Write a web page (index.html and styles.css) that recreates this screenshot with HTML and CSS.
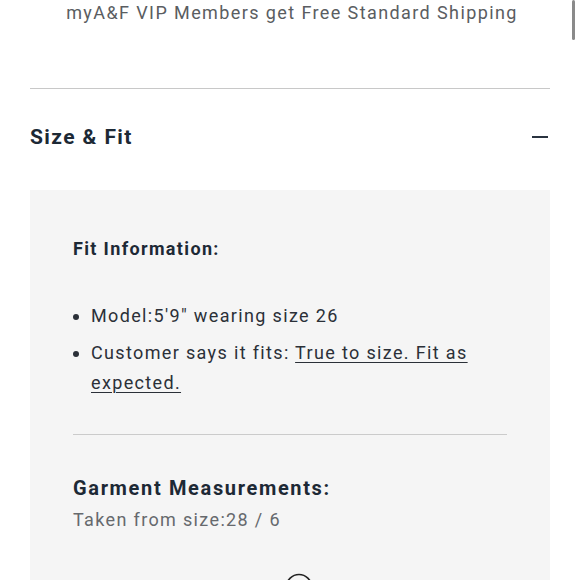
FILE: index.html
```html
<!DOCTYPE html>
<html lang="en">
<head>
<meta charset="utf-8">
<title>Size &amp; Fit</title>
<link rel="stylesheet" href="styles.css">
</head>
<body>
<p class="shipping">myA&amp;F VIP Members get Free Standard Shipping</p>
<section class="accordion">
  <div class="acc-header">
    <h2 class="acc-title">Size &amp; Fit</h2>
    <span class="minus" aria-hidden="true"></span>
  </div>
  <div class="acc-panel">
    <h3 class="fit-title">Fit Information:</h3>
    <ul class="fit-list">
      <li>Model:5'9" wearing size 26</li>
      <li>Customer says it fits: <a class="fit-link" href="#">True to size. Fit as expected.</a></li>
    </ul>
    <hr class="divider">
    <h3 class="garment-title">Garment Measurements:</h3>
    <p class="taken">Taken from size:28 / 6</p>
    <div class="icon-row">
      <svg class="circle-icon" width="28" height="28" viewBox="0 0 28 28"><circle cx="14" cy="14" r="12.5" fill="none" stroke="#222" stroke-width="1.6"/></svg>
    </div>
  </div>
</section>
<div class="scrollbar"></div>
</body>
</html>
```
FILE: styles.css
```css
html, body {
  margin: 0;
  padding: 0;
  background: #fff;
  overflow: hidden;
}
body {
  font-family: Roboto, "Liberation Sans", sans-serif;
  color: #2b3038;
}
.shipping {
  margin: 0;
  text-align: center;
  font-size: 18px;
  line-height: 26px;
  letter-spacing: 1.4px;
  color: #5a5d61;
  padding-left: 4px;
}
.accordion {
  margin: 62px 30px 0;
  border-top: 1px solid #c8c8c8;
}
.acc-header {
  display: flex;
  align-items: center;
  justify-content: space-between;
  padding: 34px 0 39px;
}
.acc-title {
  margin: 0;
  font-size: 21px;
  line-height: 28px;
  font-weight: 700;
  letter-spacing: 1.4px;
  color: #1d2935;
}
.minus {
  width: 16px;
  height: 1.5px;
  background: #2a3340;
  margin-right: 2px;
}
.acc-panel {
  background: #f5f5f5;
  padding: 45px 43px 0;
}
.fit-title {
  margin: 0;
  font-size: 18px;
  line-height: 28px;
  font-weight: 700;
  letter-spacing: 1.35px;
  color: #1d2935;
}
.fit-list {
  margin: 38px 0 0;
  padding-left: 18px;
  font-size: 18px;
  line-height: 30px;
  letter-spacing: 1.35px;
  color: #2b3038;
}
.fit-list li + li {
  margin-top: 7px;
}
.fit-link {
  color: #2b3038;
  text-decoration: underline;
  text-underline-offset: 3px;
  text-decoration-thickness: 1px;
}
.divider {
  margin: 36px 0 0;
  border: 0;
  border-top: 1.5px solid #cbcbcb;
  height: 0;
}
.garment-title {
  margin: 39px 0 0;
  font-size: 20px;
  line-height: 28px;
  font-weight: 700;
  letter-spacing: 1.65px;
  color: #1d2935;
}
.taken {
  margin: 5px 0 0;
  font-size: 18px;
  line-height: 26px;
  letter-spacing: 1.35px;
  color: #66696d;
}
.icon-row {
  display: flex;
  justify-content: center;
  padding: 40px 0 20px;
  padding-left: 18px;
}
.scrollbar {
  position: fixed;
  top: 0;
  right: 5px;
  width: 3px;
  height: 40px;
  border-radius: 2px;
  background: #8a8a8a;
}
```
